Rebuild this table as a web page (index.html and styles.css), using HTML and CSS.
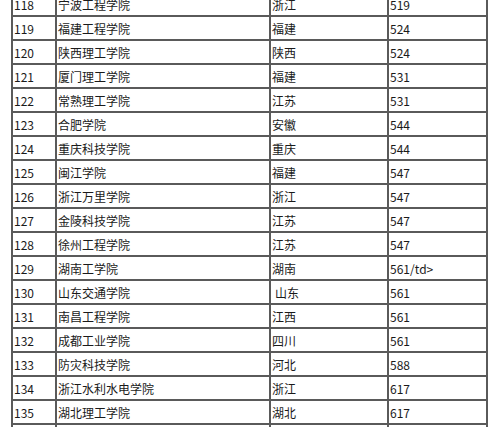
FILE: index.html
```html
<!DOCTYPE html>
<html lang="zh-CN">
<head>
<meta charset="utf-8">
<title>院校排名</title>
<link rel="stylesheet" href="styles.css">
</head>
<body>
<table class="rank">
  <colgroup>
    <col class="c-no"><col class="c-name"><col class="c-prov"><col class="c-score">
  </colgroup>
  <tbody>
    <tr><td>118</td><td>宁波工程学院</td><td>浙江</td><td>519</td></tr>
    <tr><td>119</td><td>福建工程学院</td><td>福建</td><td>524</td></tr>
    <tr><td>120</td><td>陕西理工学院</td><td>陕西</td><td>524</td></tr>
    <tr><td>121</td><td>厦门理工学院</td><td>福建</td><td>531</td></tr>
    <tr><td>122</td><td>常熟理工学院</td><td>江苏</td><td>531</td></tr>
    <tr><td>123</td><td>合肥学院</td><td>安徽</td><td>544</td></tr>
    <tr><td>124</td><td>重庆科技学院</td><td>重庆</td><td>544</td></tr>
    <tr><td>125</td><td>闽江学院</td><td>福建</td><td>547</td></tr>
    <tr><td>126</td><td>浙江万里学院</td><td>浙江</td><td>547</td></tr>
    <tr><td>127</td><td>金陵科技学院</td><td>江苏</td><td>547</td></tr>
    <tr><td>128</td><td>徐州工程学院</td><td>江苏</td><td>547</td></tr>
    <tr><td>129</td><td>湖南工学院</td><td>湖南</td><td>561/td&gt;</td></tr>
    <tr><td>130</td><td>山东交通学院</td><td><span class="indent">山东</span></td><td>561</td></tr>
    <tr><td>131</td><td>南昌工程学院</td><td>江西</td><td>561</td></tr>
    <tr><td>132</td><td>成都工业学院</td><td>四川</td><td>561</td></tr>
    <tr><td>133</td><td>防灾科技学院</td><td>河北</td><td>588</td></tr>
    <tr><td>134</td><td>浙江水利水电学院</td><td>浙江</td><td>617</td></tr>
    <tr><td>135</td><td>湖北理工学院</td><td>湖北</td><td>617</td></tr>
    <tr><td></td><td></td><td></td><td></td></tr>
  </tbody>
</table>
</body>
</html>
```

FILE: styles.css
```css
html, body {
  margin: 0;
  padding: 0;
  background: #ffffff;
}

.rank {
  margin: -9px 0 0 11px;
  table-layout: fixed;
  width: 477px;
  border-collapse: separate;
  border-spacing: 2px;
  background: #5a5a5a;
  font-family: "Noto Sans CJK SC", "Liberation Sans", sans-serif;
  font-size: 12px;
  color: #1a1a1a;
}

.c-no { width: 42px; }
.c-name { width: 212px; }
.c-prov { width: 116px; }
.c-score { width: 97px; }

.rank td {
  background: #ffffff;
  height: 22px;
  padding: 2px 0 0 1px;
  box-sizing: border-box;
  vertical-align: middle;
  line-height: 14px;
  white-space: nowrap;
  overflow: hidden;
}

.indent {
  padding-left: 3px;
}
```
